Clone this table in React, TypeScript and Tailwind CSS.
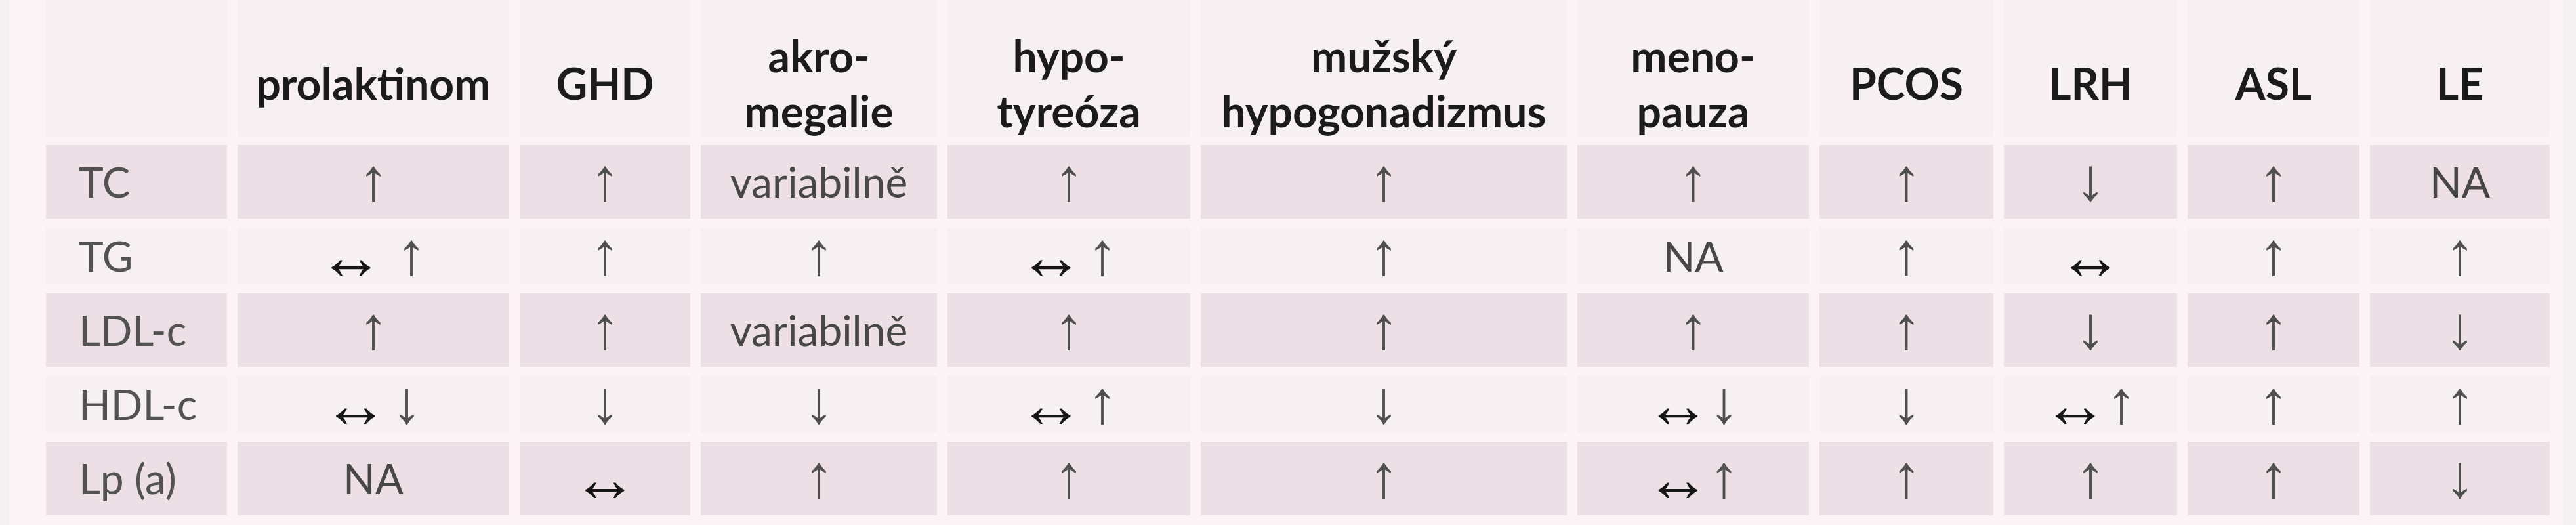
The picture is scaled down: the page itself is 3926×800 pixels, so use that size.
import React from 'react';

type Row = { label: string; shaded: boolean; values: string[] };

const headers: string[][] = [
  [],
  ['prolaktinom'],
  ['GHD'],
  ['akro-', 'megalie'],
  ['hypo-', 'tyreóza'],
  ['mužský', 'hypogonadizmus'],
  ['meno-', 'pauza'],
  ['PCOS'],
  ['LRH'],
  ['ASL'],
  ['LE'],
];

// " " = wide gap, "|" = narrow gap between arrows
const rows: Row[] = [
  { label: 'TC', shaded: true, values: ['↑', '↑', 'variabilně', '↑', '↑', '↑', '↑', '↓', '↑', 'NA'] },
  { label: 'TG', shaded: false, values: ['↔ ↑', '↑', '↑', '↔|↑', '↑', 'NA', '↑', '↔', '↑', '↑'] },
  { label: 'LDL-c', shaded: true, values: ['↑', '↑', 'variabilně', '↑', '↑', '↑', '↑', '↓', '↑', '↓'] },
  { label: 'HDL-c', shaded: false, values: ['↔|↓', '↓', '↓', '↔|↑', '↓', '↔↓', '↓', '↔↑', '↑', '↑'] },
  { label: 'Lp (a)', shaded: true, values: ['NA', '↔', '↑', '↑', '↑', '↔↑', '↑', '↑', '↑', '↓'] },
];

const isArrows = (v: string) => /^[↑↓↔ |]+$/.test(v);

const Value: React.FC<{ v: string }> = ({ v }) => {
  if (!isArrows(v)) return <span>{v}</span>;
  return (
    <span className="flex items-center">
      {v.split('').map((ch, i) => {
        if (ch === ' ') return <span key={i} className="w-[22px]" />;
        if (ch === '|') return <span key={i} className="w-[8px]" />;
        if (ch === '↔')
          return (
            <span key={i} className="font-['Liberation_Sans',sans-serif] font-bold text-[100px] leading-none text-[#151515] -mx-[3px]">
              ↔
            </span>
          );
        return (
          <span key={i} className="font-['Liberation_Sans',sans-serif] text-[92px] leading-none text-[#4f4f4f] -mt-[8px]">
            {ch}
          </span>
        );
      })}
    </span>
  );
};

export default function App() {
  return (
    <div className="w-[3926px] h-[800px] bg-[#f5f0f2] pl-[15px] pr-[20px] font-['Lato',sans-serif]">
      <div className="h-full bg-[#fbf3f6] pl-[55px] pr-[20px]">
        <div className="grid grid-cols-[276px_414px_260px_360px_370px_558px_353px_265px_264px_262px_274px] grid-rows-[207px_112px_86px_112px_86px_112px] gap-x-[16px] gap-y-[14px]">
          {headers.map((lines, i) => (
            <div
              key={'h' + i}
              className="bg-[#f7f0f2] flex flex-col items-center justify-center pt-[46px] text-[66px] leading-[84px] font-bold text-[#1b1b1b] text-center"
            >
              {lines.map((l) => (
                <span key={l} className="whitespace-nowrap">
                  {l}
                </span>
              ))}
            </div>
          ))}
          {rows.map((r) => (
            <React.Fragment key={r.label}>
              <div
                className={
                  (r.shaded ? 'bg-[#ecdfe5] ' : 'bg-[#f7f0f2] ') +
                  'flex items-center pl-[50px] text-[64px] text-[#525252] whitespace-nowrap'
                }
              >
                {r.label}
              </div>
              {r.values.map((v, j) => (
                <div
                  key={r.label + j}
                  className={
                    (r.shaded ? 'bg-[#ecdfe5] ' : 'bg-[#f7f0f2] ') +
                    'flex items-center justify-center text-[64px] text-[#474747] whitespace-nowrap'
                  }
                >
                  <Value v={v} />
                </div>
              ))}
            </React.Fragment>
          ))}
        </div>
      </div>
    </div>
  );
}
